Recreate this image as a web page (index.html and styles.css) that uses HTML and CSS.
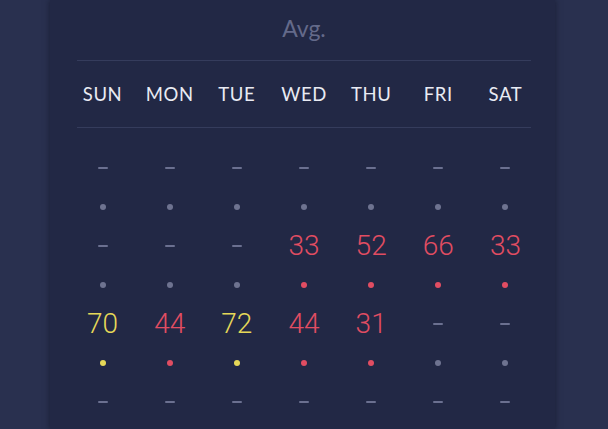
FILE: index.html
```html
<!DOCTYPE html>
<html>
<head>
<meta charset="utf-8">
<link rel="stylesheet" href="styles.css">
</head>
<body>
<div class="panel">
  <div class="avg">Avg.</div>
  <div class="header">
    <div class="days">
      <span>SUN</span><span>MON</span><span>TUE</span><span>WED</span><span>THU</span><span>FRI</span><span>SAT</span>
    </div>
  </div>
  <div class="weeks">
    <div class="week">
      <div class="cell"><div class="val"><i class="dash"></i></div><div class="mark"><i class="dot"></i></div></div>
      <div class="cell"><div class="val"><i class="dash"></i></div><div class="mark"><i class="dot"></i></div></div>
      <div class="cell"><div class="val"><i class="dash"></i></div><div class="mark"><i class="dot"></i></div></div>
      <div class="cell"><div class="val"><i class="dash"></i></div><div class="mark"><i class="dot"></i></div></div>
      <div class="cell"><div class="val"><i class="dash"></i></div><div class="mark"><i class="dot"></i></div></div>
      <div class="cell"><div class="val"><i class="dash"></i></div><div class="mark"><i class="dot"></i></div></div>
      <div class="cell"><div class="val"><i class="dash"></i></div><div class="mark"><i class="dot"></i></div></div>
    </div>
    <div class="week">
      <div class="cell"><div class="val"><i class="dash"></i></div><div class="mark"><i class="dot"></i></div></div>
      <div class="cell"><div class="val"><i class="dash"></i></div><div class="mark"><i class="dot"></i></div></div>
      <div class="cell"><div class="val"><i class="dash"></i></div><div class="mark"><i class="dot"></i></div></div>
      <div class="cell red"><div class="val">33</div><div class="mark"><i class="dot"></i></div></div>
      <div class="cell red"><div class="val">52</div><div class="mark"><i class="dot"></i></div></div>
      <div class="cell red"><div class="val">66</div><div class="mark"><i class="dot"></i></div></div>
      <div class="cell red"><div class="val">33</div><div class="mark"><i class="dot"></i></div></div>
    </div>
    <div class="week">
      <div class="cell yellow"><div class="val">70</div><div class="mark"><i class="dot"></i></div></div>
      <div class="cell red"><div class="val">44</div><div class="mark"><i class="dot"></i></div></div>
      <div class="cell yellow"><div class="val">72</div><div class="mark"><i class="dot"></i></div></div>
      <div class="cell red"><div class="val">44</div><div class="mark"><i class="dot"></i></div></div>
      <div class="cell red"><div class="val">31</div><div class="mark"><i class="dot"></i></div></div>
      <div class="cell"><div class="val"><i class="dash"></i></div><div class="mark"><i class="dot"></i></div></div>
      <div class="cell"><div class="val"><i class="dash"></i></div><div class="mark"><i class="dot"></i></div></div>
    </div>
    <div class="week">
      <div class="cell"><div class="val"><i class="dash"></i></div><div class="mark"><i class="dot"></i></div></div>
      <div class="cell"><div class="val"><i class="dash"></i></div><div class="mark"><i class="dot"></i></div></div>
      <div class="cell"><div class="val"><i class="dash"></i></div><div class="mark"><i class="dot"></i></div></div>
      <div class="cell"><div class="val"><i class="dash"></i></div><div class="mark"><i class="dot"></i></div></div>
      <div class="cell"><div class="val"><i class="dash"></i></div><div class="mark"><i class="dot"></i></div></div>
      <div class="cell"><div class="val"><i class="dash"></i></div><div class="mark"><i class="dot"></i></div></div>
      <div class="cell"><div class="val"><i class="dash"></i></div><div class="mark"><i class="dot"></i></div></div>
    </div>
  </div>
</div>
</body>
</html>
```
FILE: styles.css
```css
html, body {
  margin: 0;
  height: 100%;
}
body {
  background: #29304f;
  overflow: hidden;
  font-family: Lato, "Open Sans", sans-serif;
}
.panel {
  margin-left: 50px;
  width: 505px;
  height: 100%;
  overflow: hidden;
  box-sizing: border-box;
  padding: 0 24px 0 27px;
  background: #222845;
  box-shadow: 0 0 6px rgba(10, 12, 28, 0.55);
}
.avg {
  height: 61px;
  line-height: 57px;
  text-align: center;
  font-size: 23px;
  color: #646a8a;
  border-bottom: 1.5px solid #353c5c;
  box-sizing: border-box;
}
.header {
  height: 67px;
  border-bottom: 1.5px solid #353c5c;
  box-sizing: border-box;
  display: flex;
  align-items: center;
}
.days {
  flex: 1;
  display: grid;
  grid-template-columns: repeat(7, 1fr);
  margin: 0 -8px;
  font-size: 18.5px;
  letter-spacing: 0.6px;
  color: #e9ebf3;
  text-align: center;
}
.days span {
  line-height: 20px;
}
.weeks {
  margin: 0 -8px;
  padding-top: 20px;
}
.week {
  display: grid;
  grid-template-columns: repeat(7, 1fr);
}
.cell {
  display: flex;
  flex-direction: column;
  align-items: center;
  color: #6e7390;
}
.val {
  height: 40px;
  line-height: 40px;
  display: flex;
  align-items: center;
  justify-content: center;
  font-family: Roboto, "Liberation Sans", sans-serif;
  font-weight: 300;
  font-size: 28px;
}
.mark {
  height: 38px;
  display: flex;
  align-items: center;
  justify-content: center;
}
.dash {
  display: block;
  width: 10px;
  height: 2px;
  border-radius: 1px;
  background: #6b7090;
}
.dot {
  display: block;
  width: 6px;
  height: 6px;
  border-radius: 50%;
  background: #6e7390;
}
.red {
  color: #e14d62;
}
.red .dot {
  background: #e14d62;
}
.yellow {
  color: #e6d858;
}
.yellow .dot {
  background: #e6d858;
}
```
